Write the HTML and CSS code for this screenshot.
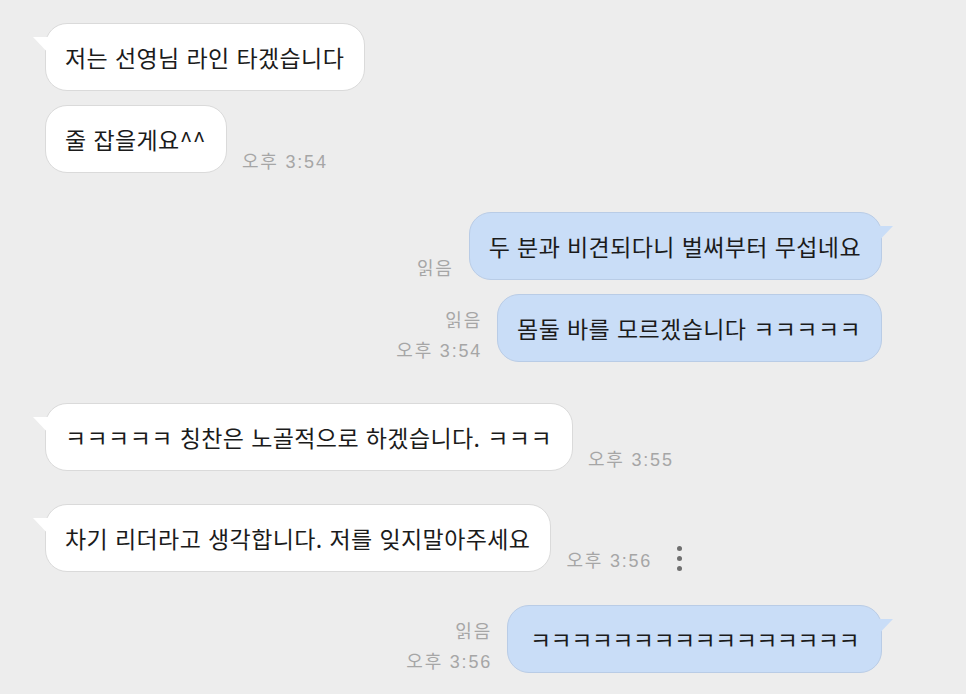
FILE: index.html
```html
<!DOCTYPE html>
<html lang="ko">
  <head>
    <meta charset="UTF-8" />
    <meta name="viewport" content="width=device-width, initial-scale=1.0" />
    <title>채팅</title>
    <link rel="stylesheet" href="styles.css">
  </head>
  <body>
    <div class="chat">
      <div class="row in">
        <div class="bubble tail">저는 선영님 라인 타겠습니다</div>
      </div>
      <div class="row in near">
        <div class="bubble">줄 잡을게요^^</div>
        <div class="meta"><span class="time">오후 3:54</span></div>
      </div>

      <div class="row out group">
        <div class="meta"><span class="read">읽음</span></div>
        <div class="bubble tail">두 분과 비견되다니 벌써부터 무섭네요</div>
      </div>
      <div class="row out near">
        <div class="meta">
          <span class="read">읽음</span>
          <span class="time">오후 3:54</span>
        </div>
        <div class="bubble">몸둘 바를 모르겠습니다 ㅋㅋㅋㅋㅋ</div>
      </div>

      <div class="row in group wide">
        <div class="bubble tail">ㅋㅋㅋㅋㅋ 칭찬은 노골적으로 하겠습니다. ㅋㅋㅋ</div>
        <div class="meta"><span class="time">오후 3:55</span></div>
      </div>

      <div class="row in group tight">
        <div class="bubble tail">차기 리더라고 생각합니다. 저를 잊지말아주세요</div>
        <div class="meta"><span class="time">오후 3:56</span></div>
        <div class="more"><i></i><i></i><i></i></div>
      </div>

      <div class="row out group tight">
        <div class="meta">
          <span class="read">읽음</span>
          <span class="time">오후 3:56</span>
        </div>
        <div class="bubble tail laugh">ㅋㅋㅋㅋㅋㅋㅋㅋㅋㅋㅋㅋㅋㅋㅋㅋ</div>
      </div>
    </div>
  </body>
</html>
```

FILE: styles.css
```css
body {
  margin: 0;
  background-color: #ededed;
  font-family: "Noto Sans CJK KR", "Noto Sans", sans-serif;
  color: #1b1b1b;
}

.chat {
  padding: 23px 84px 20px 45px;
}

.row {
  display: flex;
  align-items: flex-end;
  gap: 15px;
}
.row.out {
  justify-content: flex-end;
}
.row.near {
  margin-top: 14px;
}
.row.group {
  margin-top: 39px;
}
.row.wide {
  margin-top: 41px;
}
.row.group.tight {
  margin-top: 33px;
}

.bubble {
  position: relative;
  padding: 19px 20px 19px 19px;
  font-size: 23px;
  letter-spacing: 0.4px;
  line-height: 28px;
  border-radius: 22px;
  background-color: #ffffff;
  border: 1px solid #dadada;
  white-space: nowrap;
}
.out .bubble {
  background-color: #c9ddf7;
  border-color: #b9cce6;
}
.bubble.laugh {
  letter-spacing: -0.6px;
  padding-left: 22px;
  padding-right: 22px;
}

/* little pointer on the first bubble of a group */
.bubble.tail::before {
  content: "";
  position: absolute;
  top: 13px;
  width: 19px;
  height: 20px;
  background-color: inherit;
}
.in .bubble.tail::before {
  left: -13px;
  clip-path: polygon(0 0, 100% 0, 100% 100%);
}
.out .bubble.tail::before {
  right: -12px;
  clip-path: polygon(0 0, 100% 0, 0 100%);
}

.meta {
  display: flex;
  flex-direction: column;
  gap: 10px;
  padding-bottom: 1px;
  font-family: "Liberation Sans", "Noto Sans CJK KR", sans-serif;
  font-size: 18px;
  letter-spacing: 1.8px;
  line-height: 20px;
  color: #a6a6a6;
  white-space: nowrap;
}
.out .meta {
  align-items: flex-end;
}

.more {
  display: flex;
  flex-direction: column;
  gap: 5px;
  margin-left: 10px;
  padding-bottom: 1px;
}
.more i {
  width: 5px;
  height: 5px;
  border-radius: 50%;
  background-color: #6f6f6f;
}
```
